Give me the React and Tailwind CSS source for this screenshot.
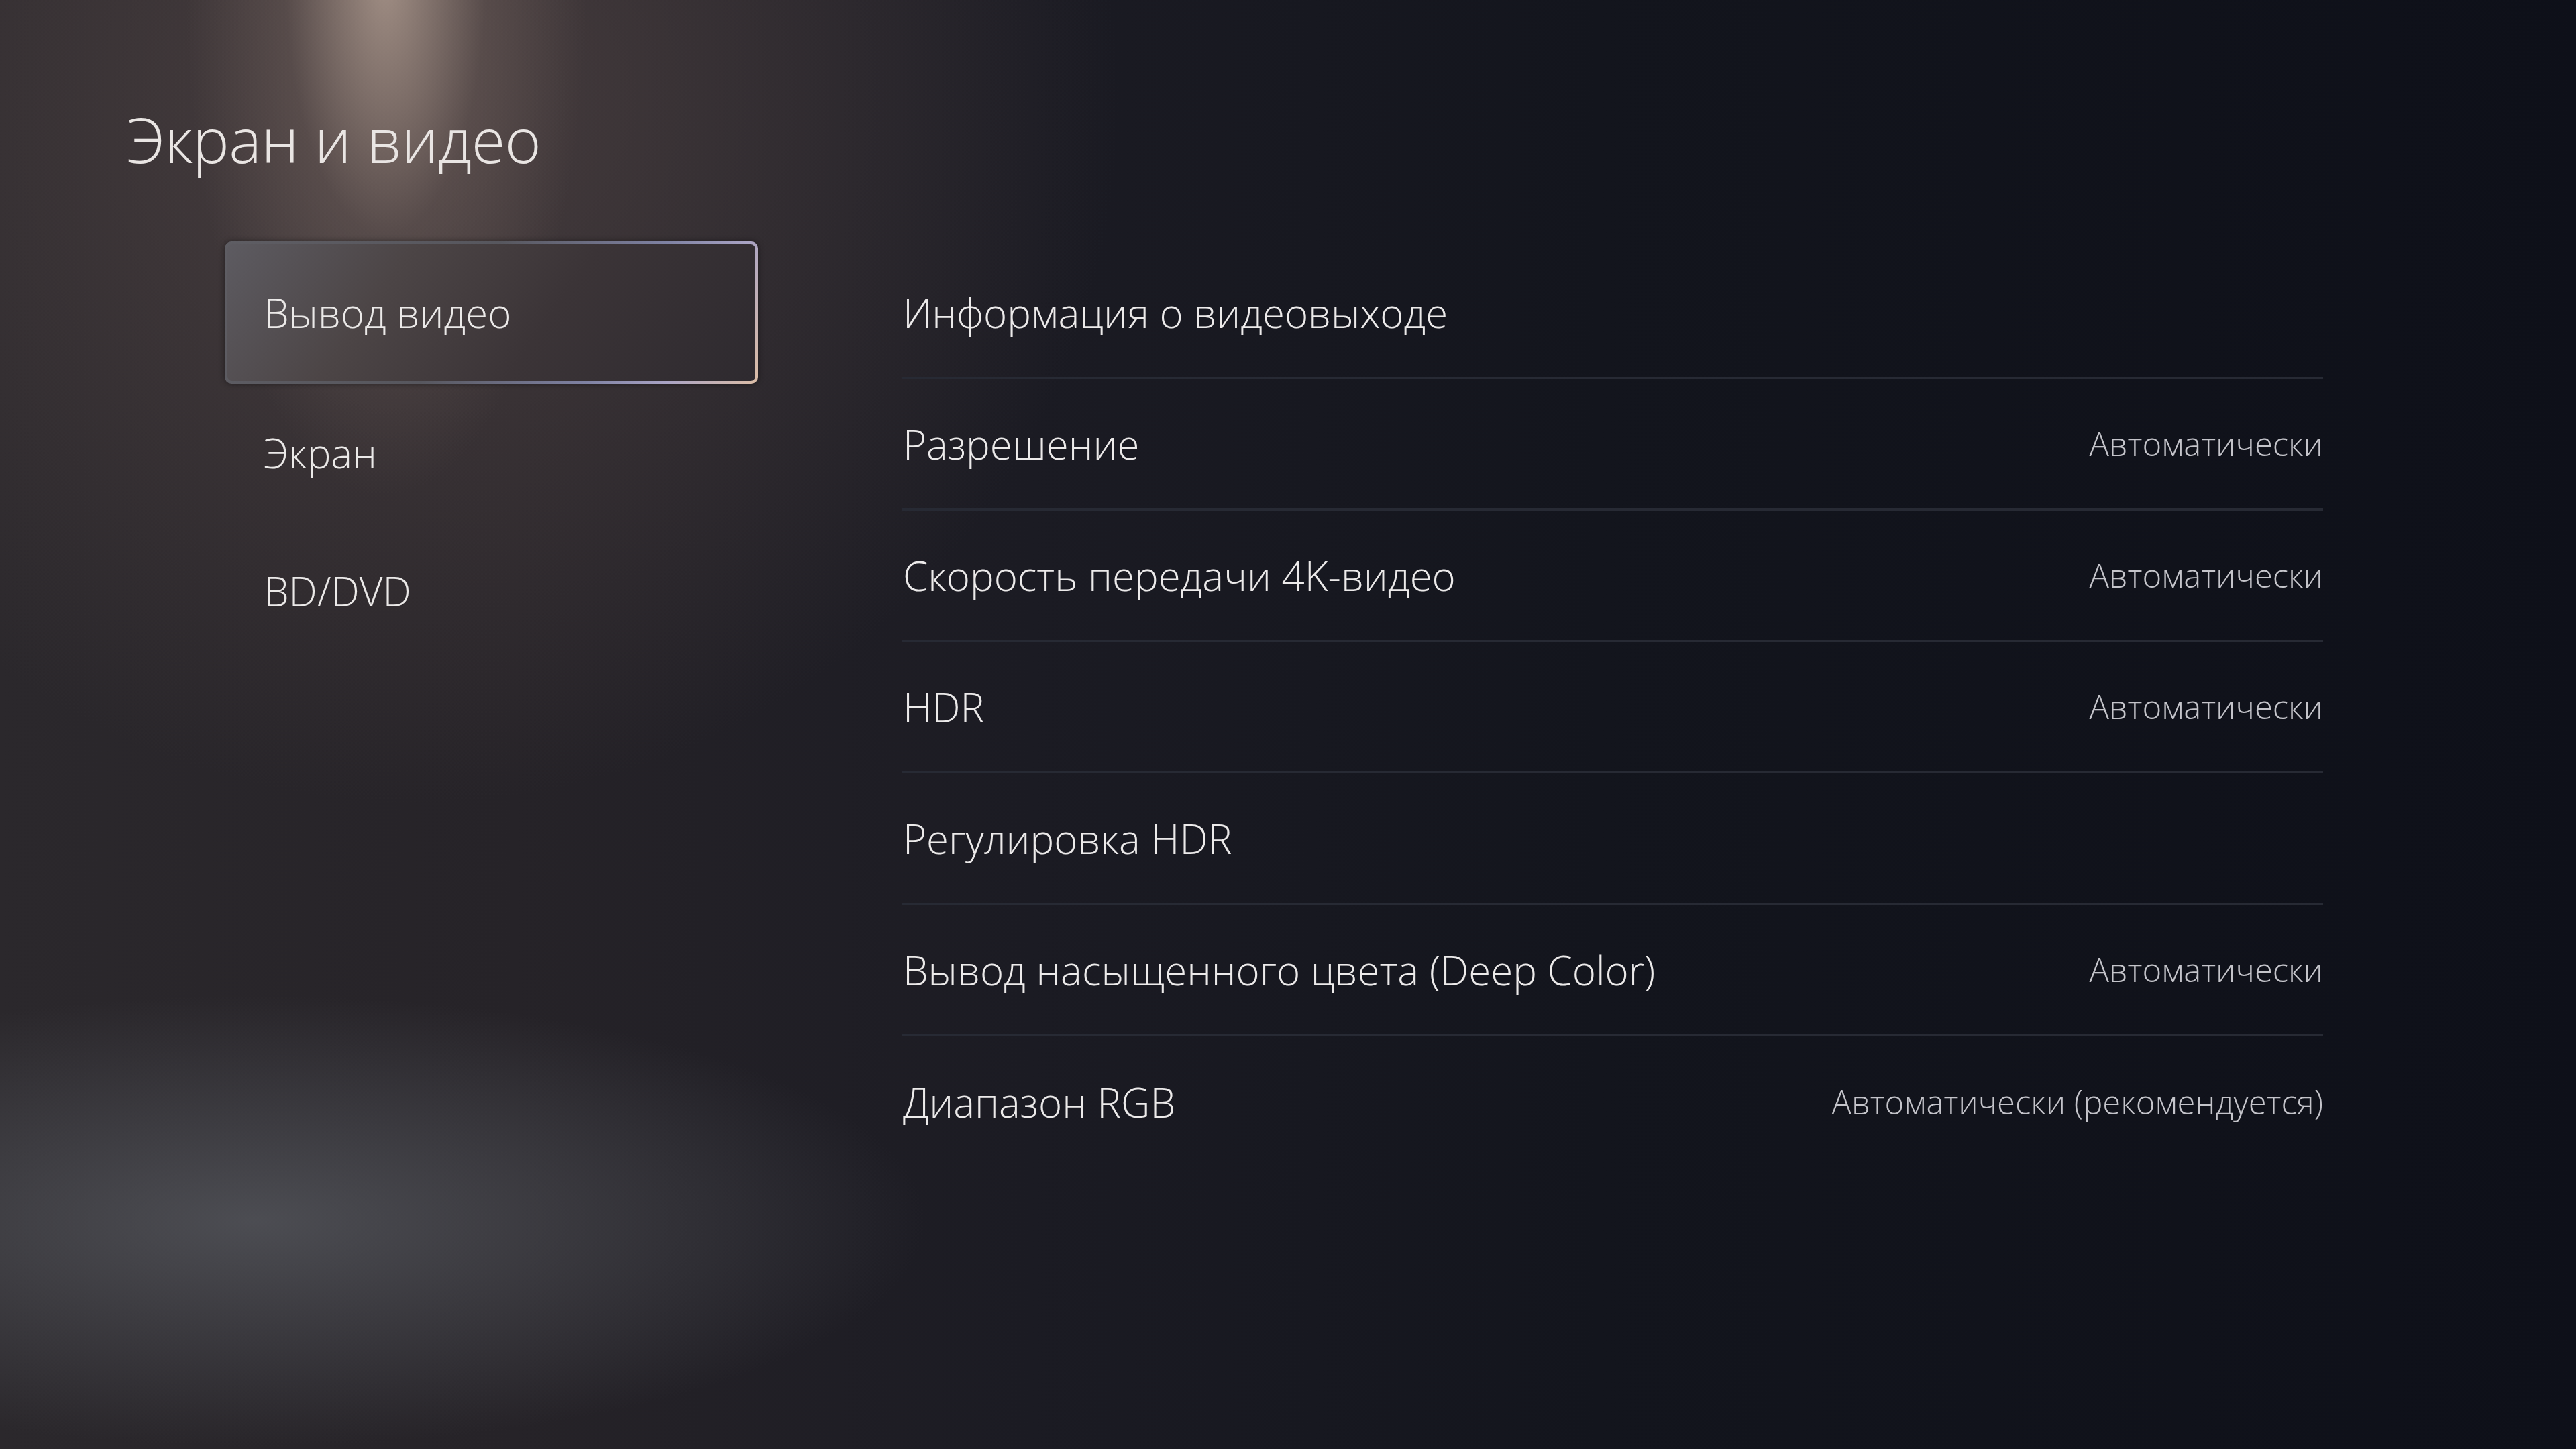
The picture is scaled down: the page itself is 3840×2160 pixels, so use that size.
import React from "react";

const rows = [
  { label: "Информация о видеовыходе", value: "" },
  { label: "Разрешение", value: "Автоматически" },
  { label: "Скорость передачи 4K-видео", value: "Автоматически" },
  { label: "HDR", value: "Автоматически" },
  { label: "Регулировка HDR", value: "" },
  { label: "Вывод насыщенного цвета (Deep Color)", value: "Автоматически" },
  { label: "Диапазон RGB", value: "Автоматически (рекомендуется)" },
];

export default function App() {
  return (
    <div
      className="w-[3840px] h-[2160px] overflow-hidden flex flex-col font-['Open_Sans','Noto_Sans',sans-serif] font-light text-[#ebe9e8] bg-[image:radial-gradient(ellipse_300px_780px_at_575px_-40px,rgba(178,158,146,0.85),rgba(125,108,102,0.35)_50%,transparent_100%),radial-gradient(ellipse_1500px_1500px_at_620px_150px,rgba(100,84,82,0.55),transparent_70%),radial-gradient(ellipse_1250px_420px_at_380px_1820px,rgba(88,90,96,0.75),transparent_80%),linear-gradient(to_right,#2b282c_0%,#262328_20%,#1b1b23_40%,#13151d_62%,#0e1019_100%)]"
    >
      <div className="mt-[158px] h-[100px] leading-[100px] pl-[189px] text-[92px] tracking-[-0.5px] text-[#e9e5e3]">
        Экран и видео
      </div>

      <div className="mt-[102px] flex pl-[335px]">
        {/* left menu */}
        <div className="w-[795px] flex flex-col">
          <div className="h-[212px] rounded-[10px] p-[4px] bg-[linear-gradient(120deg,#5e5d63_0%,#57575e_45%,#7f82a3_72%,#a9a3c4_85%,#dcbda6_100%)] shadow-[0_0_10px_rgba(0,0,0,0.45)]">
            <div className="h-full rounded-[7px] flex items-center pl-[54px] text-[60px] bg-[linear-gradient(125deg,#5d5b61_0%,#4c4546_30%,#3b3437_60%,#2e2a2f_100%)]">
              Вывод видео
            </div>
          </div>
          <div className="h-[206px] flex items-center pl-[58px] text-[60px]">
            Экран
          </div>
          <div className="h-[206px] flex items-center pl-[58px] text-[60px]">
            BD/DVD
          </div>
        </div>

        {/* right list */}
        <div className="ml-[214px] w-[2119px] pt-[9px] flex flex-col">
          {rows.map((r, i) => (
            <div
              key={r.label}
              className={
                i < rows.length - 1
                  ? "h-[196px] flex items-center justify-between border-b-[3px] border-[#272a34]"
                  : "h-[196px] flex items-center justify-between"
              }
            >
              <span className="text-[60px] text-[#eceaea] pl-[2px]">{r.label}</span>
              {r.value ? (
                <span className="text-[49px] text-[#c4c4ca]">{r.value}</span>
              ) : null}
            </div>
          ))}
        </div>
      </div>
    </div>
  );
}
